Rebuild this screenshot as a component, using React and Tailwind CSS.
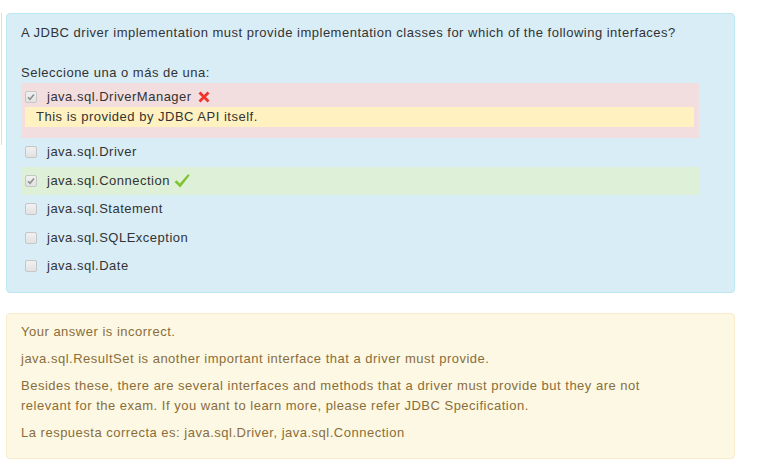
import React from 'react';

const options = [
    { label: 'java.sql.DriverManager', checked: true, state: 'wrong', feedback: 'This is provided by JDBC API itself.' },
    { label: 'java.sql.Driver' },
    { label: 'java.sql.Connection', checked: true, state: 'right' },
    { label: 'java.sql.Statement' },
    { label: 'java.sql.SQLException' },
    { label: 'java.sql.Date' },
];

function Box({ checked }) {
    return (
        <span className="flex-shrink-0 w-[12px] h-[12px] rounded-[2px] border border-[#c6c6c6] bg-gradient-to-b from-[#f1f1f1] to-[#e2e2e2] flex items-center justify-center">
            {checked && (
                <svg width="8" height="8" viewBox="0 0 8 8">
                    <path d="M1 4.2 L3 6.2 L7 1.5" fill="none" stroke="#8e8e8e" strokeWidth="1.6" />
                </svg>
            )}
        </span>
    );
}

function WrongIcon() {
    return (
        <svg width="12" height="12" viewBox="0 0 12 12" className="ml-[6px]">
            <path d="M1.5 1.5 L10.5 10.5 M10.5 1.5 L1.5 10.5" stroke="#f5312c" strokeWidth="2.8" strokeLinecap="butt" />
        </svg>
    );
}

function RightIcon() {
    return (
        <svg width="16" height="16" viewBox="0 0 16 16" className="ml-[4px]">
            <path d="M0.5 9 L2.6 7.3 L5.8 10.6 L14.2 1 L15.6 2.4 L6.2 14.5 Z" fill="#80c232" />
        </svg>
    );
}

export default function App() {
    return (
        <div className="relative w-[757px] h-[469px] bg-white overflow-hidden font-['Liberation_Sans',Arial,sans-serif] text-[13px] leading-[20px] tracking-[0.5px]">
            {/* bord de la colonne voisine */}
            <div className="absolute left-[1px] top-[13px] w-px h-[132px] bg-[#dcdcdc]" />

            <div className="ml-[6px] mt-[13px] w-[729px] rounded-[4px] border border-[#bce8f1] bg-[#d9edf7] text-[#333] pl-[14px] pr-[35px] pt-[9px] pb-[11.5px]">
                <p className="mb-5">A JDBC driver implementation must provide implementation classes for which of the following interfaces?</p>
                <p>Seleccione una o más de una:</p>

                <div>
                    {options.map((o) => (
                        <div
                            key={o.label}
                            className={`pl-[4px] pr-[5px] py-[4.25px] ${o.state === 'wrong' ? 'bg-[#f2dede] pb-[10.75px]' : o.state === 'right' ? 'bg-[#dff0d8]' : ''}`}
                        >
                            <div className="flex items-center h-[20px]">
                                <Box checked={o.checked} />
                                <span className="ml-[10px]">{o.label}</span>
                                {o.state === 'wrong' && <WrongIcon />}
                                {o.state === 'right' && <RightIcon />}
                            </div>
                            {o.feedback && (
                                <div className="bg-[#fff2c0] pl-[11px] h-[20px]">{o.feedback}</div>
                            )}
                        </div>
                    ))}
                </div>
            </div>

            <div className="ml-[6px] mt-[20px] w-[729px] rounded-[4px] border border-[#faebcc] bg-[#fcf8e3] text-[#8a6d3b] pl-[14px] pr-[35px] pt-[8px] pb-[8px]">
                <p className="mb-[7px]">Your answer is incorrect.</p>
                <p className="mb-[7px]">java.sql.ResultSet is another important interface that a driver must provide.</p>
                <p className="mb-[7px] max-w-[640px]">Besides these, there are several interfaces and methods that a driver must provide but they are not relevant for the exam. If you want to learn more, please refer JDBC Specification.</p>
                <p className="mb-[7px]">La respuesta correcta es: java.sql.Driver, java.sql.Connection</p>
            </div>
        </div>
    );
}
